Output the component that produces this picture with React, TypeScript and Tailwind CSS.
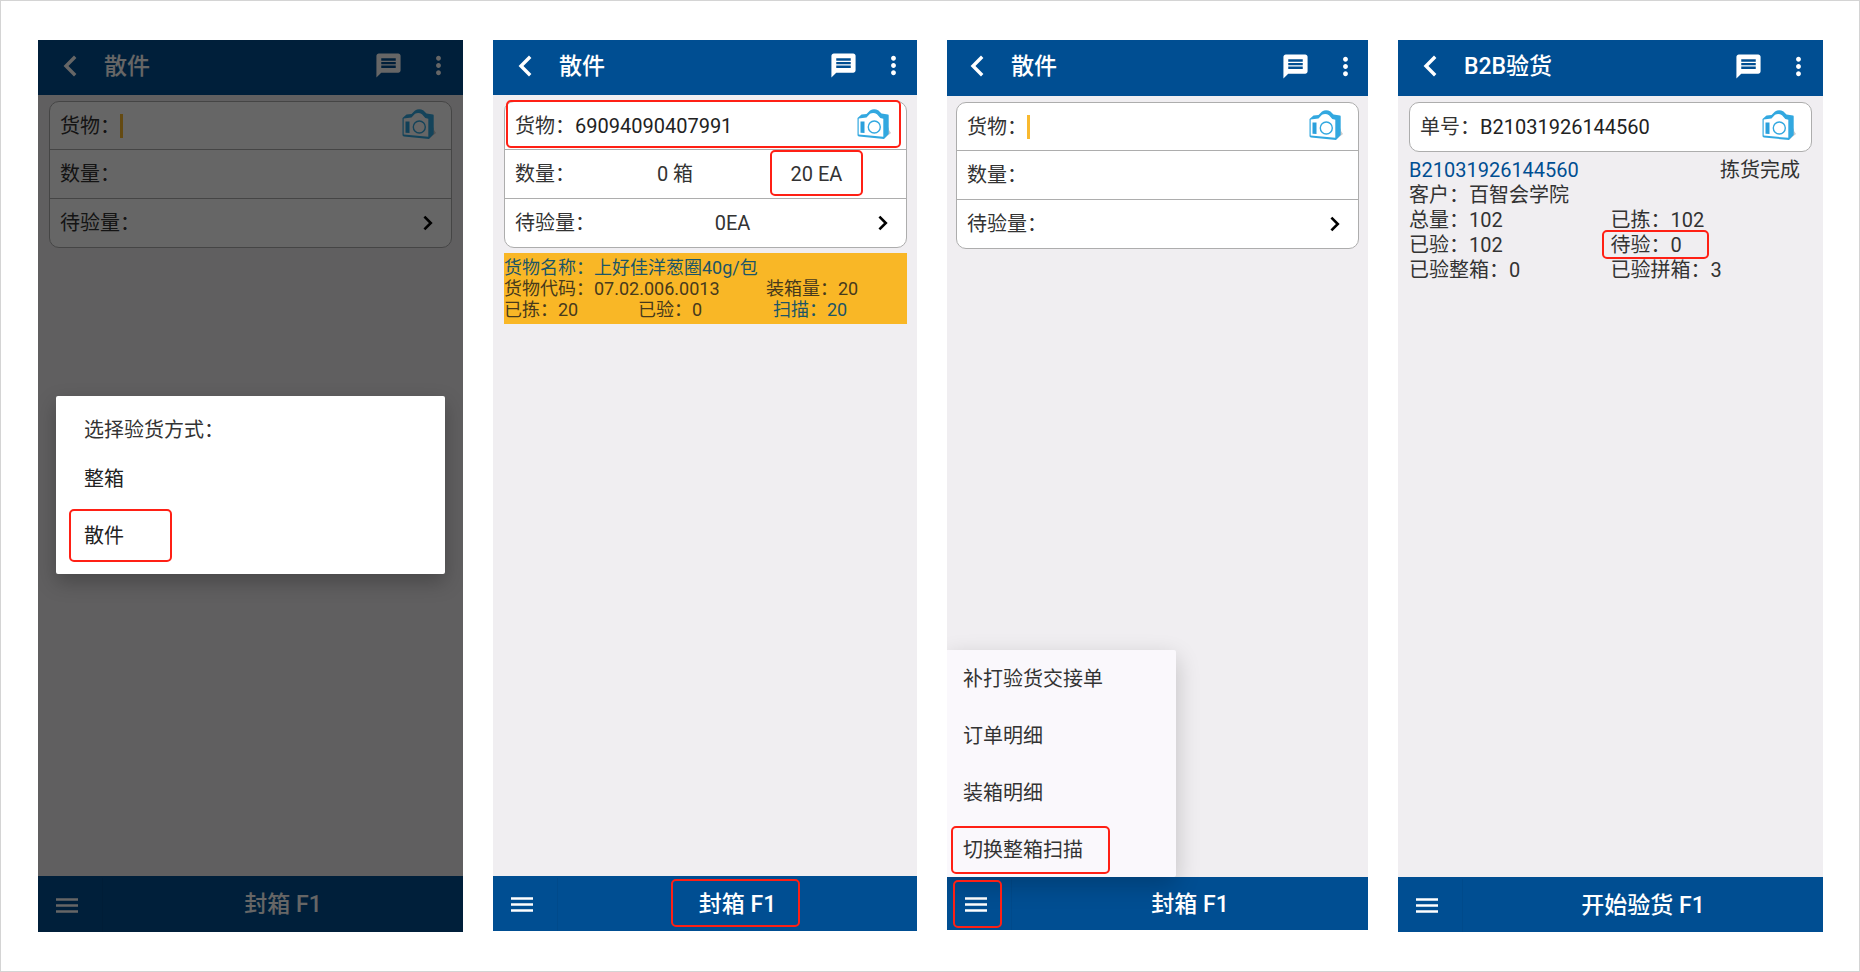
import clsx from "clsx";
import { ReactNode } from "react";
import { MdMessage, MdMoreVert } from "react-icons/md";

export default function App() {
  return (
    <main className="grid min-h-screen grid-cols-[425fr_424fr_421fr_425fr] gap-x-[30px] border border-[#d4d4d4] bg-white pt-[39px] pr-9 pb-[39px] pl-[37px] font-[Roboto,'Noto_Sans_CJK_SC',sans-serif] text-xl leading-6 text-[#333]">
      <PickModePhone />
      <ScannedPhone />
      <MenuPhone />
      <OrderPhone />
    </main>
  );
}

function PickModePhone() {
  return (
    <Phone
      title="散件"
      action="封箱 F1"
      headerClass="h-[55px] pr-2.5 pl-[11px]"
      footerClass="h-14"
      overlay={
        <div className="absolute inset-0 bg-black/60">
          <div
            role="dialog"
            aria-label="选择验货方式"
            className="absolute inset-x-[18px] top-[356px] flex h-[178px] flex-col items-start rounded-xs bg-white pt-[22px] pl-7 text-[#222] shadow-[0_8px_20px_rgba(0,0,0,0.25)]"
          >
            <h2 className="text-[#333]">选择验货方式：</h2>
            <button className="mt-[25px]">整箱</button>
            <button className="relative mt-[33px]">
              散件
              <Highlight className="-top-[15px] -right-12 -bottom-3.5 -left-[15px]" />
            </button>
          </div>
        </div>
      }
    >
      <div className="px-[11px] pt-1.5">
        <Form>
          <ScanField id="goods-1" label="货物：" caret />
          <Field>数量：</Field>
          <Field>
            待验量：
            <ArrowRight />
          </Field>
        </Form>
      </div>
    </Phone>
  );
}

function ScannedPhone() {
  return (
    <Phone
      title="散件"
      action="封箱 F1"
      className="mb-px"
      headerClass="h-[55px] pr-[9px] pl-[11px]"
      footerClass="h-[55px]"
      actionHighlight
    >
      <div className="pt-1.5 pr-2.5 pl-[11px]">
        <Form>
          <ScanField id="goods-2" label="货物：" value="69094090407991">
            <Highlight className="-top-0.5 right-[5px] bottom-px left-px" />
          </ScanField>
          <Field>
            <span className="w-[92px]">数量：</span>
            <span className="w-[136px] text-center">0 箱</span>
            <span className="flex flex-1 justify-center pr-4">
              <span className="relative">
                20 EA
                <Highlight className="-inset-x-[21px] -top-3 -bottom-2.5" />
              </span>
            </span>
          </Field>
          <Field>
            <span className="w-[100px]">待验量：</span>
            <span className="flex-1 pr-7 text-center">0EA</span>
            <ArrowRight />
          </Field>
        </Form>
        <div className="mt-[5px] bg-[#f9b726] py-1 text-lg leading-[21px] text-[#473a1c]">
          <p className="text-[#1c5567]">货物名称：上好佳洋葱圈40g/包</p>
          <div className="flex">
            <p className="w-[262px]">货物代码：07.02.006.0013</p>
            <p>装箱量：20</p>
          </div>
          <div className="flex">
            <p className="w-[134px]">已拣：20</p>
            <p className="w-[135px]">已验：0</p>
            <p className="text-[#1c5567]">扫描：20</p>
          </div>
        </div>
      </div>
    </Phone>
  );
}

const menuItems = ["补打验货交接单", "订单明细", "装箱明细", "切换整箱扫描"];

function MenuPhone() {
  return (
    <Phone
      title="散件"
      action="封箱 F1"
      className="mb-0.5"
      headerClass="h-14 pr-2 pl-[9px]"
      footerClass="h-[53px]"
      menuHighlight
      overlay={
        <ul className="absolute bottom-[53px] left-0 w-[229px] rounded-r-xs bg-[#faf8fc] shadow-[0_8px_24px_rgba(0,0,0,0.2)]">
          {menuItems.map((item) => (
            <li key={item} className="h-[57px] pt-[17px] pl-4 last:h-14">
              <button className="relative">
                {item}
                {item === "切换整箱扫描" && (
                  <Highlight className="-top-3 -right-[27px] -bottom-3 -left-3" />
                )}
              </button>
            </li>
          ))}
        </ul>
      }
    >
      <div className="px-[9px] pt-1.5">
        <Form>
          <ScanField id="goods-3" label="货物：" caret />
          <Field>数量：</Field>
          <Field>
            待验量：
            <ArrowRight />
          </Field>
        </Form>
      </div>
    </Phone>
  );
}

function OrderPhone() {
  return (
    <Phone
      title="B2B验货"
      action="开始验货 F1"
      headerClass="h-14 pr-2.5 pl-[11px]"
      footerClass="h-[55px]"
    >
      <div className="px-[11px] pt-1.5">
        <Form>
          <ScanField id="order" label="单号：" value="B21031926144560" />
        </Form>
        <div className="mt-1.5 leading-[25px]">
          <div className="flex justify-between pr-3">
            <p className="text-[#004e92]">B21031926144560</p>
            <p>拣货完成</p>
          </div>
          <p>客户：百智会学院</p>
          <div className="grid grid-cols-2">
            <p>总量：102</p>
            <p>已拣：102</p>
            <p>已验：102</p>
            <p>
              <span className="relative">
                待验：0
                <Highlight className="-top-[3px] -right-[27px] -bottom-0.5 -left-[9px]" />
              </span>
            </p>
            <p>已验整箱：0</p>
            <p>已验拼箱：3</p>
          </div>
        </div>
      </div>
    </Phone>
  );
}

function Phone({
  title,
  action,
  className,
  headerClass,
  footerClass,
  menuHighlight,
  actionHighlight,
  overlay,
  children,
}: {
  title: string;
  action: string;
  className?: string;
  headerClass: string;
  footerClass: string;
  menuHighlight?: boolean;
  actionHighlight?: boolean;
  overlay?: ReactNode;
  children: ReactNode;
}) {
  return (
    <section
      className={clsx("relative flex flex-col overflow-hidden bg-[#f0eef1]", className)}
    >
      <header className={clsx("bg-[#004e92] text-white", headerClass)}>
        <div className="flex h-full items-center pb-1">
          <button aria-label="返回" className="ml-3.5">
            <svg viewBox="0 0 14 22" className="h-[22px] w-3.5 fill-none stroke-white stroke-[3.4]">
              <path d="M12.2 1.8 3 11l9.2 9.2" />
            </svg>
          </button>
          <h1 className="ml-[27px] flex-1 pt-0.5 text-[23px] leading-7 font-medium">{title}</h1>
          <button aria-label="消息" className="mr-[21px]">
            <MdMessage className="size-[29px]" />
          </button>
          <button aria-label="更多">
            <MdMoreVert className="size-[29px]" />
          </button>
        </div>
      </header>
      <div className="flex-1">{children}</div>
      <footer className={clsx("flex bg-[#004e92] pt-0.5 text-white", footerClass)}>
        <button
          aria-label="菜单"
          className="flex w-[65px] items-center border-r border-[#004a8b] pl-[18px]"
        >
          <svg viewBox="0 0 22 15" className="h-[15px] w-[22px] stroke-white stroke-[2.5]">
            <path d="M0 1.5h22M0 7.5h22M0 13.5h22" />
          </svg>
        </button>
        <button className="flex-1 text-[23px] leading-7 font-medium">
          <span className="relative">
            {action}
            {actionHighlight && (
              <Highlight className="-top-3 -right-6 -bottom-[9px] -left-7" />
            )}
          </span>
        </button>
      </footer>
      {overlay}
      {menuHighlight && <Highlight className="bottom-0.5 left-1.5 h-12 w-[49px]" />}
    </section>
  );
}

function Form({ children }: { children: ReactNode }) {
  return (
    <div className="divide-y divide-[#adadad] rounded-[10px] border border-[#adadad] bg-white">
      {children}
    </div>
  );
}

function Field({ children }: { children: ReactNode }) {
  return (
    <div className="relative flex h-12 items-center pl-2.5 nth-2:h-[49px]">{children}</div>
  );
}

function ScanField({
  id,
  label,
  value = "",
  caret,
  children,
}: {
  id: string;
  label: string;
  value?: string;
  caret?: boolean;
  children?: ReactNode;
}) {
  return (
    <Field>
      <label htmlFor={id}>{label}</label>
      {caret && <span className="h-6 w-[3px] bg-[#f9b92f]" />}
      <input
        id={id}
        defaultValue={value}
        className="min-w-0 flex-1 text-[#222] outline-none"
      />
      <button aria-label="扫码" className="mr-[15px]">
        <Camera />
      </button>
      {children}
    </Field>
  );
}

function ArrowRight() {
  return (
    <svg
      viewBox="0 0 10 16"
      className="mr-[18px] ml-auto h-4 w-2.5 fill-none stroke-black stroke-[2.6]"
    >
      <path d="m1.4 1.6 6.4 6.4-6.4 6.4" />
    </svg>
  );
}

function Camera() {
  return (
    <svg viewBox="0 0 34 32" className="mb-1 h-8 w-[34px]">
      <path d="M27 30.5 34 25l-2-3v-3l-5 8z" fill="#000" opacity=".2" />
      <path
        d="M.5 10 4.5 6.5 9.500 6 13 2.500Q17 .2 21.500 2.500L24.500 5.500 31 6.500Q31.700 6.700 31.700 7.500V26L27 31 2 28.500Q.5 28.200.5 27z"
        fill="#32a8e0"
      />
      <path
        d="M1.700 10.500 9.500 9.500 13 5.800Q16.500 3.800 20 6.200L23.300 10 26.300 10.700V28.800L1.700 26.600z"
        fill="#fff"
      />
      <path d="M3.500 13.500h4v11.500l-4-.3z" fill="#2aa0dc" />
      <circle cx="17.300" cy="19" r="6" fill="none" stroke="#32a8e0" strokeWidth="1.400" />
    </svg>
  );
}

function Highlight({ className }: { className: string }) {
  return (
    <span
      className={clsx(
        "pointer-events-none absolute rounded-[5px] border-2 border-[#ff2015]",
        className
      )}
    />
  );
}
